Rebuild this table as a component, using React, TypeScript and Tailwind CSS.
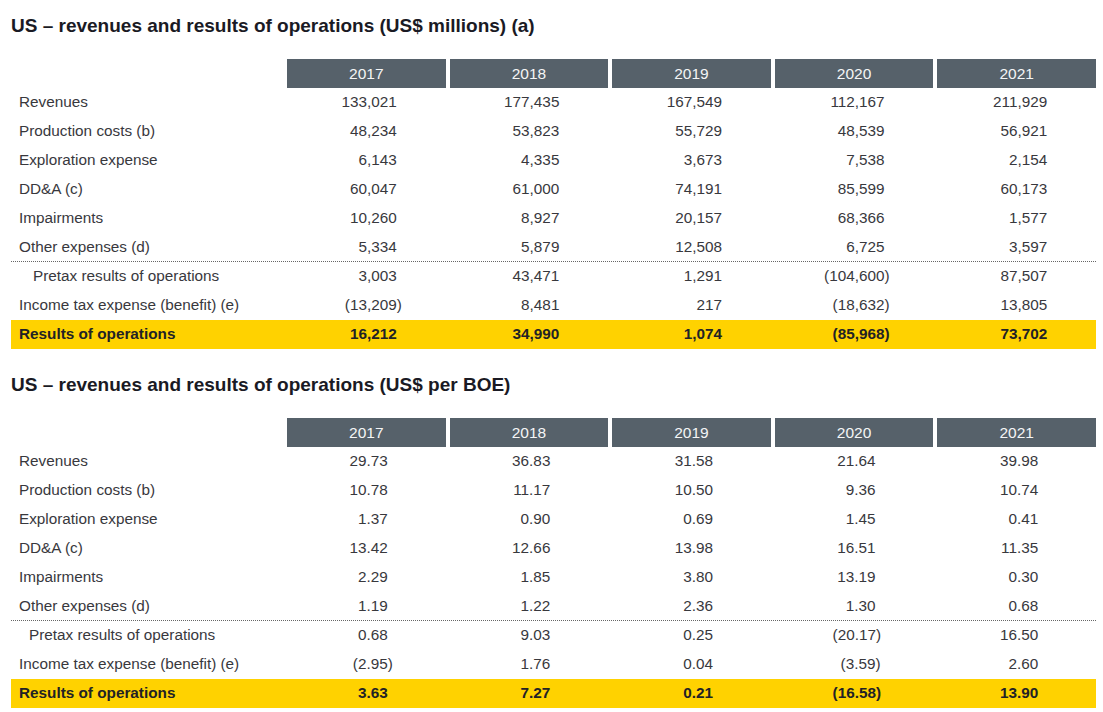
import React from "react"

// Data
type Row = { label: string; values: string[]; indent?: boolean; dotted?: boolean; total?: boolean }

const years = ["2017", "2018", "2019", "2020", "2021"]

const millions: Row[] = [
   { label: "Revenues", values: ["133,021", "177,435", "167,549", "112,167", "211,929"] },
   { label: "Production costs (b)", values: ["48,234", "53,823", "55,729", "48,539", "56,921"] },
   { label: "Exploration expense", values: ["6,143", "4,335", "3,673", "7,538", "2,154"] },
   { label: "DD&A (c)", values: ["60,047", "61,000", "74,191", "85,599", "60,173"] },
   { label: "Impairments", values: ["10,260", "8,927", "20,157", "68,366", "1,577"] },
   { label: "Other expenses (d)", values: ["5,334", "5,879", "12,508", "6,725", "3,597"], dotted: true },
   { label: "Pretax results of operations", values: ["3,003", "43,471", "1,291", "(104,600)", "87,507"], indent: true },
   { label: "Income tax expense (benefit) (e)", values: ["(13,209)", "8,481", "217", "(18,632)", "13,805"] },
   { label: "Results of operations", values: ["16,212", "34,990", "1,074", "(85,968)", "73,702"], total: true },
]

const perBoe: Row[] = [
   { label: "Revenues", values: ["29.73", "36.83", "31.58", "21.64", "39.98"] },
   { label: "Production costs (b)", values: ["10.78", "11.17", "10.50", "9.36", "10.74"] },
   { label: "Exploration expense", values: ["1.37", "0.90", "0.69", "1.45", "0.41"] },
   { label: "DD&A (c)", values: ["13.42", "12.66", "13.98", "16.51", "11.35"] },
   { label: "Impairments", values: ["2.29", "1.85", "3.80", "13.19", "0.30"] },
   { label: "Other expenses (d)", values: ["1.19", "1.22", "2.36", "1.30", "0.68"], dotted: true },
   { label: "Pretax results of operations", values: ["0.68", "9.03", "0.25", "(20.17)", "16.50"], indent: true },
   { label: "Income tax expense (benefit) (e)", values: ["(2.95)", "1.76", "0.04", "(3.59)", "2.60"] },
   { label: "Results of operations", values: ["3.63", "7.27", "0.21", "(16.58)", "13.90"], total: true },
]

// Number cell, closing paren hangs to the right
const Num = ({ value, width }: { value: string; width: string }) => {
   const neg = value.endsWith(")")
   return (
      <div className="flex justify-center">
         <div className={`${width} text-right whitespace-nowrap`}>
            {neg ? value.slice(0, -1) : value}
            {neg && <span className="mr-[-5px]">)</span>}
         </div>
      </div>
   )
}

const Table = ({
   title,
   rows,
   numWidth,
   indent,
   className,
}: {
   title: string
   rows: Row[]
   numWidth: string
   indent: string
   className?: string
}) => (
   <section className={className}>
      <h2 className="h-6 leading-6 text-[19px] font-bold text-[#1a1a24]">{title}</h2>
      <div className="mt-[21px] w-[1085px]">
         {/* Header */}
         <div className="grid grid-cols-[272px_repeat(5,1fr)] gap-x-1 h-[29px]">
            <div />
            {years.map(y => (
               <div key={y} className="bg-[#56616a] text-[#f4f5f6] flex items-center justify-center text-[15.5px]">
                  {y}
               </div>
            ))}
         </div>
         {/* Rows */}
         {rows.map(row => (
            <div
               key={row.label}
               className={`grid grid-cols-[272px_repeat(5,1fr)] gap-x-1 items-center text-[15.3px] ${
                  row.total ? "bg-[#ffd200] text-[#222226] font-semibold h-[29px]" : "text-[#38383d] h-[29px]"
               } ${row.dotted ? "border-b border-dotted border-[#666]" : ""}`}
            >
               <div className={row.indent ? indent : "pl-2"}>{row.label}</div>
               {row.values.map((v, i) => (
                  <Num key={i} value={v} width={numWidth} />
               ))}
            </div>
         ))}
      </div>
   </section>
)

// App
const App = () => {
   return (
      <div className="w-[1103px] h-[712px] bg-white pl-[11px] pt-[14px] font-['Liberation_Sans',Arial,sans-serif] overflow-hidden">
         <Table
            title="US – revenues and results of operations (US$ millions) (a)"
            rows={millions}
            numWidth="w-[61px]"
            indent="pl-[22px]"
         />
         <Table
            title="US – revenues and results of operations (US$ per BOE)"
            rows={perBoe}
            numWidth="w-[43px]"
            indent="pl-[18px]"
            className="mt-[24px]"
         />
      </div>
   )
}

export default App
